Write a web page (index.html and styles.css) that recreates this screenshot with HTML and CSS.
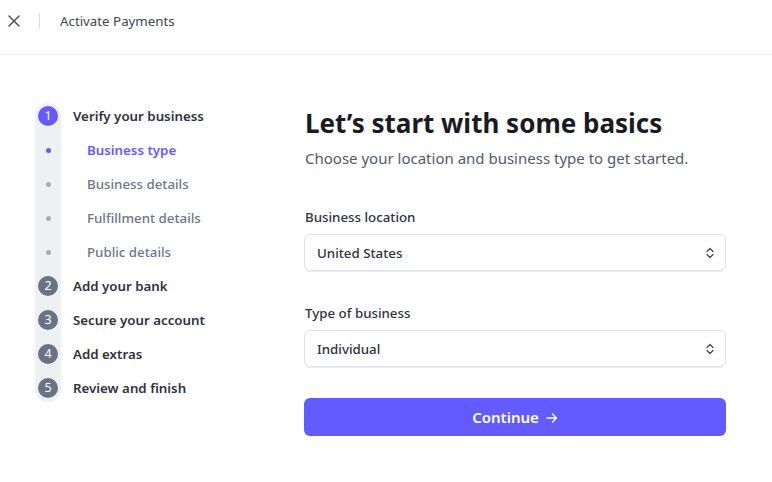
FILE: index.html
```html
<!DOCTYPE html>
<html lang="en">
<head>
<meta charset="utf-8">
<title>Activate Payments</title>
<link rel="stylesheet" href="styles.css">
</head>
<body>
<header class="topbar">
  <button class="close" aria-label="Close">
    <svg width="12" height="12" viewBox="0 0 12 12"><path d="M1 1L11 11M11 1L1 11" stroke="#414552" stroke-width="1.4" stroke-linecap="round"/></svg>
  </button>
  <span class="divider"></span>
  <span class="title">Activate Payments</span>
</header>
<main class="layout">
  <nav class="steps">
    <div class="step"><span class="marker"><span class="num active">1</span></span><span class="step-label">Verify your business</span></div>
    <div class="step sub current"><span class="marker"><span class="dot"></span></span><span class="sub-label">Business type</span></div>
    <div class="step sub"><span class="marker"><span class="dot"></span></span><span class="sub-label">Business details</span></div>
    <div class="step sub"><span class="marker"><span class="dot"></span></span><span class="sub-label">Fulfillment details</span></div>
    <div class="step sub"><span class="marker"><span class="dot"></span></span><span class="sub-label">Public details</span></div>
    <div class="step"><span class="marker"><span class="num">2</span></span><span class="step-label">Add your bank</span></div>
    <div class="step"><span class="marker"><span class="num">3</span></span><span class="step-label">Secure your account</span></div>
    <div class="step"><span class="marker"><span class="num">4</span></span><span class="step-label">Add extras</span></div>
    <div class="step"><span class="marker"><span class="num">5</span></span><span class="step-label">Review and finish</span></div>
  </nav>
  <section class="form">
    <h1>Let’s start with some basics</h1>
    <p class="lead">Choose your location and business type to get started.</p>
    <div class="field first">
      <label class="label">Business location</label>
      <div class="select"><span>United States</span>
        <svg width="12" height="12" viewBox="0 0 12 12"><path d="M3 4.5L6 1.5L9 4.5M3 7.5L6 10.5L9 7.5" fill="none" stroke="#414552" stroke-width="1.3" stroke-linecap="round" stroke-linejoin="round"/></svg>
      </div>
    </div>
    <div class="field">
      <label class="label">Type of business</label>
      <div class="select"><span>Individual</span>
        <svg width="12" height="12" viewBox="0 0 12 12"><path d="M3 4.5L6 1.5L9 4.5M3 7.5L6 10.5L9 7.5" fill="none" stroke="#414552" stroke-width="1.3" stroke-linecap="round" stroke-linejoin="round"/></svg>
      </div>
    </div>
    <button class="continue"><span>Continue</span>
      <svg class="arrow" width="12" height="12" viewBox="0 0 12 12"><path d="M1 6H10.5M6.5 2L10.5 6L6.5 10" fill="none" stroke="#fff" stroke-width="1.3" stroke-linecap="round" stroke-linejoin="round"/></svg>
    </button>
  </section>
</main>
</body>
</html>
```
FILE: styles.css
```css
* { box-sizing: border-box; }
html, body { margin: 0; background: #fff; }
body {
  font-family: "Noto Sans", "Open Sans", sans-serif;
  color: #30313d;
  -webkit-font-smoothing: antialiased;
}
.topbar {
  height: 55px;
  border-bottom: 1px solid #ebeef1;
  display: flex;
  align-items: flex-start;
  padding: 12px 0 0 5px;
}
.close {
  border: 0; background: none; padding: 0;
  width: 17px; height: 18px;
  display: flex; align-items: center; justify-content: center;
}
.divider {
  width: 1px; height: 16px; background: #d8dce3;
  margin: 1px 0 0 17px;
}
.title {
  margin-left: 20px;
  font-size: 13.3px;
  line-height: 18px;
  color: #414552;
}
.layout {
  display: flex;
  align-items: flex-start;
  padding: 48px 0 0 35px;
}
.steps {
  position: relative;
  width: 269px;
}
.steps::before {
  content: "";
  position: absolute;
  left: 0; top: 0; bottom: -1px;
  width: 26px;
  background: #eef0f3;
  border-radius: 13px;
}
.step {
  position: relative;
  display: flex;
  align-items: center;
  height: 34px;
}
.step:first-child { margin-top: -4px; }
.step:last-child { margin-bottom: -4px; }
.marker {
  width: 26px;
  display: flex;
  justify-content: center;
  align-items: center;
}
.num {
  width: 20px; height: 20px;
  border-radius: 50%;
  background: #687385;
  color: #fff;
  font-size: 12.5px;
  line-height: 20px;
  text-align: center;
}
.num.active { background: #635bff; }
.dot {
  width: 5px; height: 5px; border-radius: 50%;
  background: #a3acb9;
}
.current .dot { background: #635bff; }
.step-label {
  margin-left: 12px;
  font-size: 13.3px;
  font-weight: 600;
  color: #30313d;
}
.sub-label {
  margin-left: 26px;
  font-size: 13.3px;
  font-weight: 500;
  color: #6c7688;
}
.current .sub-label { color: #635bff; font-weight: 600; }
.form {
  width: 422px;
  padding-top: 4px;
}
h1 {
  margin: 0 0 0 1px;
  font-size: 26px;
  line-height: 32px;
  font-weight: 700;
  color: #1a1b25;
}
.lead {
  margin: 8px 0 0 1px;
  font-size: 15px;
  line-height: 22px;
  color: #545969;
}
.field { margin-top: 33px; }
.field.first { margin-top: 39px; }
.label {
  display: block;
  font-size: 13.3px;
  font-weight: 500;
  line-height: 18px;
  color: #30313d;
  margin: 0 0 8px 1px;
}
.select {
  height: 37px;
  border-radius: 6px;
  border: 1px solid #dfe2e7;
  box-shadow: 0 1px 1px rgba(0,0,0,.08);
  display: flex;
  align-items: center;
  justify-content: space-between;
  padding: 0 9px 0 12px;
  font-size: 13.3px;
  font-weight: 500;
  color: #30313d;
}
.continue {
  margin-top: 31px;
  width: 100%;
  height: 38px;
  border: 0;
  border-radius: 6px;
  background: #635bff;
  color: #fff;
  font-family: inherit;
  font-size: 15px;
  font-weight: 600;
  display: flex;
  align-items: center;
  justify-content: center;
  gap: 7px;
}
.arrow { margin-top: 1px; }
```
